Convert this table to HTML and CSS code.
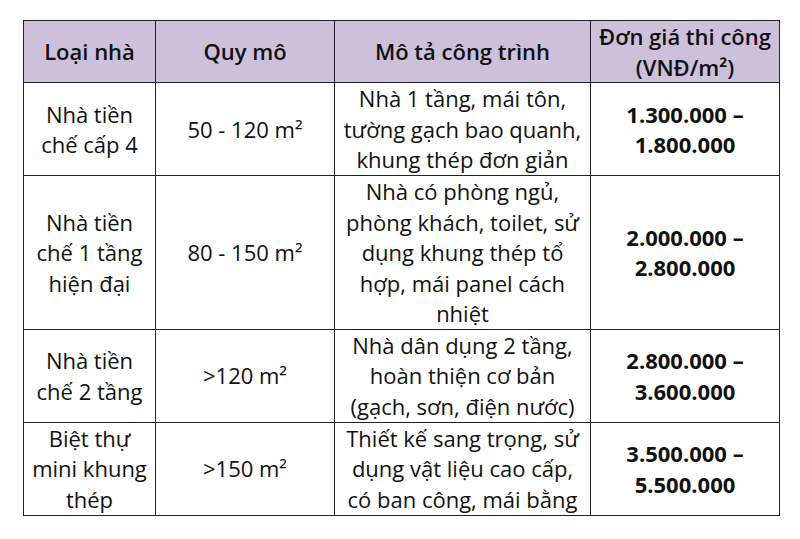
FILE: index.html
```html
<!DOCTYPE html>
<html lang="vi">
<head>
<meta charset="utf-8">
<link rel="stylesheet" href="styles.css">
</head>
<body>
<table class="price-table">
  <colgroup>
    <col class="c1"><col class="c2"><col class="c3"><col class="c4">
  </colgroup>
  <thead>
    <tr class="head">
      <th>Loại nhà</th>
      <th>Quy mô</th>
      <th>Mô tả công trình</th>
      <th>Đơn giá thi công<br>(VNĐ/m²)</th>
    </tr>
  </thead>
  <tbody>
    <tr class="r1">
      <td>Nhà tiền<br>chế cấp 4</td>
      <td>50 - 120 m²</td>
      <td>Nhà 1 tầng, mái tôn,<br>tường gạch bao quanh,<br>khung thép đơn giản</td>
      <td class="price">1.300.000 –<br>1.800.000</td>
    </tr>
    <tr class="r2">
      <td>Nhà tiền<br>chế 1 tầng<br>hiện đại</td>
      <td>80 - 150 m²</td>
      <td>Nhà có phòng ngủ,<br>phòng khách, toilet, sử<br>dụng khung thép tổ<br>hợp, mái panel cách<br>nhiệt</td>
      <td class="price">2.000.000 –<br>2.800.000</td>
    </tr>
    <tr class="r3">
      <td>Nhà tiền<br>chế 2 tầng</td>
      <td>&gt;120 m²</td>
      <td>Nhà dân dụng 2 tầng,<br>hoàn thiện cơ bản<br>(gạch, sơn, điện nước)</td>
      <td class="price">2.800.000 –<br>3.600.000</td>
    </tr>
    <tr class="r4">
      <td>Biệt thự<br>mini khung<br>thép</td>
      <td>&gt;150 m²</td>
      <td>Thiết kế sang trọng, sử<br>dụng vật liệu cao cấp,<br>có ban công, mái bằng</td>
      <td class="price">3.500.000 –<br>5.500.000</td>
    </tr>
  </tbody>
</table>
</body>
</html>
```
FILE: styles.css
```css
html, body {
  margin: 0;
  padding: 0;
  background: #ffffff;
}
body {
  font-family: "Open Sans", "Liberation Sans", sans-serif;
  color: #111111;
}
.price-table {
  margin: 20px 0 0 23px;
  width: 756px;
  border-collapse: collapse;
  table-layout: fixed;
  font-size: 22px;
  line-height: 30.5px;
}
.c1 { width: 132px; }
.c2 { width: 179px; }
.c3 { width: 256px; }
.c4 { width: 189px; }
.price-table th,
.price-table td {
  border: 1.5px solid #222222;
  text-align: center;
  vertical-align: middle;
  padding: 0;
  white-space: nowrap;
}
.head th {
  background: #ccc0da;
  font-weight: 600;
  height: 61px;
}
.r1 td { height: 92px; }
.r2 td { height: 152px; }
.r3 td { height: 92px; }
.r4 td { height: 92px; }
.price {
  font-weight: 700;
}
```
